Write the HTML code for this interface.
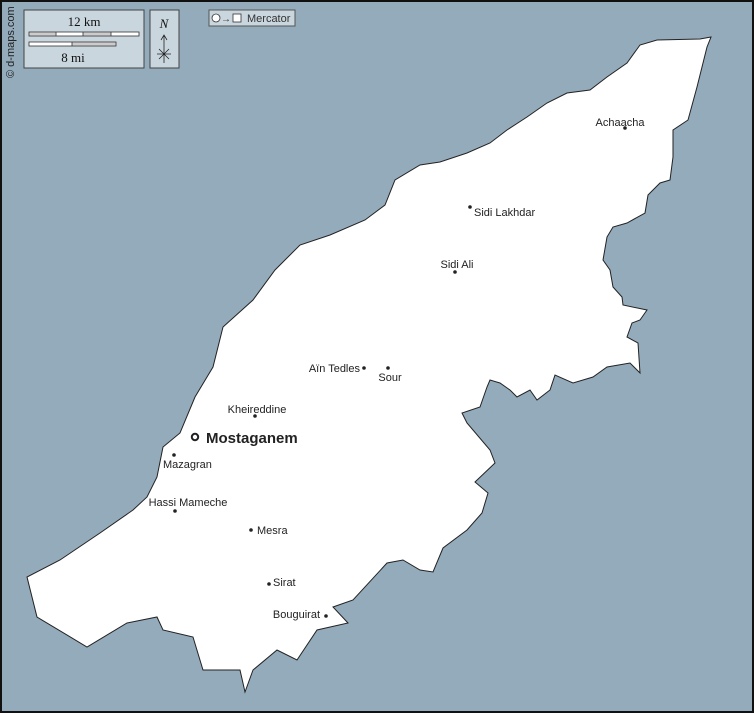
<!DOCTYPE html>
<html><head><meta charset="utf-8"><style>
body{margin:0;width:754px;height:713px;overflow:hidden;font-family:"Liberation Sans",sans-serif;}
</style></head><body>
<svg width="754" height="713" xmlns="http://www.w3.org/2000/svg" style="display:block">
<rect x="0" y="0" width="754" height="713" fill="#94abbc"/>
<polygon fill="#fff" stroke="#222" stroke-width="1" points="711,37 700,39 657,40 640,45 627,63 607,77 590,90 567,93 547,103 527,117 507,130 490,143 467,153 440,162 420,165 395,180 385,205 365,220 330,235 300,245 275,270 253,300 223,327 213,367 195,397 180,433 163,447 157,477 147,497 133,510 100,533 60,560 27,577 37,617 87,647 127,623 157,617 163,630 193,637 203,670 240,670 245,692 253,670 277,650 297,660 317,630 348,623 333,607 353,600 387,563 403,560 420,570 433,572 443,548 467,530 482,513 488,493 475,482 495,463 490,450 467,423 462,413 480,407 487,387 490,380 500,383 510,390 517,397 530,390 537,400 550,390 555,375 573,383 593,377 607,367 630,363 640,373 638,343 627,337 632,323 640,320 647,310 623,305 622,297 613,287 610,270 603,260 607,237 613,227 627,223 645,213 648,195 660,183 670,180 673,157 673,130 688,120 697,87 707,47"/>
<rect x="1" y="1" width="752" height="711" fill="none" stroke="#111" stroke-width="2"/>
<text x="14" y="78" font-size="11" fill="#222" transform="rotate(-90 14 78)">© d-maps.com</text>
<rect x="24" y="10" width="120" height="58" fill="#c9d6de" stroke="#444"/>
<text x="84" y="26" font-size="13" text-anchor="middle" font-family="Liberation Serif" fill="#111">12 km</text>
<rect x="29" y="32" width="110" height="4" fill="#fff" stroke="#333" stroke-width="0.8"/>
<rect x="29.5" y="32.5" width="26" height="3" fill="#ccc"/><rect x="83" y="32.5" width="28" height="3" fill="#ccc"/>
<path d="M56 32v4M83 32v4M111 32v4" stroke="#333" stroke-width="0.8"/>
<rect x="29" y="42" width="87" height="4" fill="#fff" stroke="#333" stroke-width="0.8"/>
<rect x="72" y="42.5" width="43.5" height="3" fill="#ccc"/>
<path d="M72 42v4" stroke="#333" stroke-width="0.8"/>
<text x="73" y="62" font-size="13" text-anchor="middle" font-family="Liberation Serif" fill="#111">8 mi</text>
<rect x="150" y="10" width="29" height="58" fill="#c9d6de" stroke="#444"/>
<text x="164" y="28" font-size="13" font-style="italic" text-anchor="middle" font-family="Liberation Serif" fill="#111">N</text>
<path d="M164 36 L164 63 M161 40 L164 35 L167 40 M157 54 L171 54 M159 49 L169 59 M169 49 L159 59" stroke="#222" fill="none" stroke-width="0.8"/>
<rect x="209" y="10" width="86" height="16" fill="#c9d6de" stroke="#555"/>
<circle cx="216" cy="18" r="4" fill="#fff" stroke="#333" stroke-width="0.8"/>
<text x="221" y="22" font-size="10" fill="#333">→</text>
<rect x="233" y="14" width="8" height="8" fill="#fff" stroke="#333" stroke-width="0.8"/>
<text x="247" y="22" font-size="11" fill="#333">Mercator</text>
<g font-size="11" fill="#222">
<circle cx="625" cy="128" r="1.8"/><text x="620" y="126" text-anchor="middle">Achaacha</text>
<circle cx="470" cy="207" r="1.8"/><text x="474" y="216">Sidi Lakhdar</text>
<circle cx="455" cy="272" r="1.8"/><text x="457" y="268" text-anchor="middle">Sidi Ali</text>
<circle cx="364" cy="368" r="1.8"/><text x="360" y="372" text-anchor="end">Aïn Tedles</text>
<circle cx="388" cy="368" r="1.8"/><text x="390" y="381" text-anchor="middle">Sour</text>
<circle cx="255" cy="416" r="1.8"/><text x="257" y="413" text-anchor="middle">Kheireddine</text>
<circle cx="174" cy="455" r="1.8"/><text x="163" y="468">Mazagran</text>
<circle cx="175" cy="511" r="1.8"/><text x="188" y="506" text-anchor="middle">Hassi Mameche</text>
<circle cx="251" cy="530" r="1.8"/><text x="257" y="534">Mesra</text>
<circle cx="269" cy="584" r="1.8"/><text x="273" y="586">Sirat</text>
<circle cx="326" cy="616" r="1.8"/><text x="320" y="618" text-anchor="end">Bouguirat</text>
<circle cx="195" cy="437" r="3.2" fill="#fff" stroke="#222" stroke-width="2"/>
<text x="206" y="443" font-size="15" font-weight="bold">Mostaganem</text>
</g>
</svg>
</body></html>
